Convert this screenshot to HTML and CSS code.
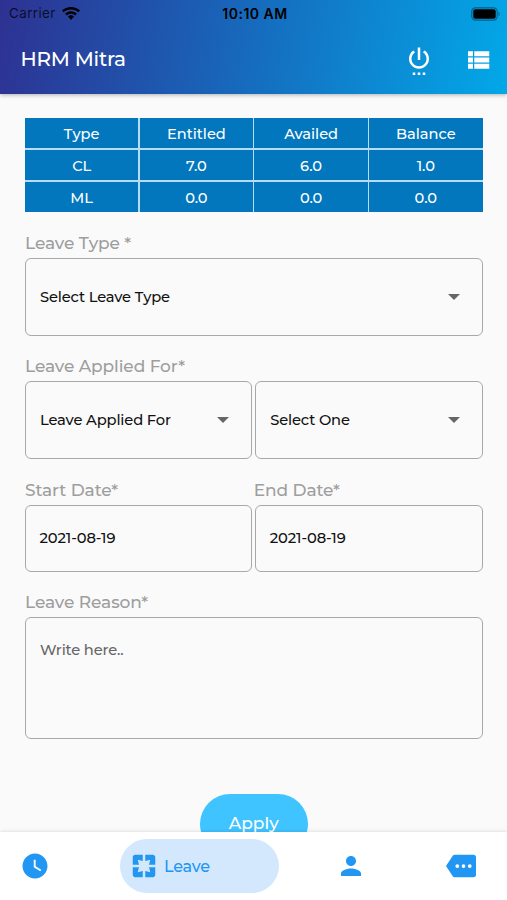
FILE: index.html
```html
<!DOCTYPE html>
<html lang="en">
<head>
<meta charset="utf-8">
<title>HRM Mitra</title>
<link rel="stylesheet" href="styles.css">
</head>
<body>
<div class="app">
  <header class="header">
    <div class="status">
      <div class="carrier"><span>Carrier</span>
        <svg class="wifi" viewBox="0 0 18 13"><path d="M9 0C5.500 0 2.300 1.300 0 3.500l1.700 1.800C3.600 3.500 6.100 2.500 9 2.500s5.400 1 7.300 2.800L18 3.500C15.700 1.300 12.500 0 9 0zM9 4.200c-2.300 0-4.400.9-5.900 2.400l1.700 1.800C5.900 7.300 7.400 6.700 9 6.700s3.100.6 4.200 1.700l1.700-1.800C13.400 5.100 11.300 4.200 9 4.200zM9 8.300c-1.100 0-2.200.5-3 1.200L9 13l3-3.500c-.8-.7-1.900-1.200-3-1.200z"/></svg>
      </div>
      <span class="time">10:10 AM</span>
      <svg class="battery" viewBox="0 0 30 14"><rect x=".8" y=".8" width="25.400" height="12.400" rx="3.600" fill="none" stroke="#000" stroke-opacity=".4" stroke-width="1.200"/><rect x="2.300" y="2.300" width="22.400" height="9.400" rx="2"/><path d="M27.500 4.800c1.500.4 1.500 4 0 4.400z" opacity=".4"/></svg>
    </div>
    <div class="toolbar">
      <h1 class="title">HRM Mitra</h1>
      <svg class="icon power" viewBox="0 0 24 24"><path d="M7 24h2v-2H7v2zm4 0h2v-2h-2v2zm2-22h-2v10h2V2zm3.560 2.440l-1.450 1.450C16.840 6.940 18 8.830 18 11c0 3.310-2.690 6-6 6s-6-2.690-6-6c0-2.170 1.160-4.060 2.880-5.120L7.440 4.440C5.360 5.880 4 8.280 4 11c0 4.420 3.580 8 8 8s8-3.580 8-8c0-2.720-1.360-5.120-3.440-6.560zM15 24h2v-2h-2v2z"/></svg>
      <svg class="icon" viewBox="0 0 24 24"><path d="M4 14h4v-4H4v4zm0 5h4v-4H4v4zM4 9h4V5H4v4zm5 5h12v-4H9v4zm0 5h12v-4H9v4zM9 5v4h12V5H9z"/></svg>
    </div>
  </header>

  <main class="content">
    <div class="balances">
      <span>Type</span><span>Entitled</span><span>Availed</span><span>Balance</span>
      <span>CL</span><span>7.0</span><span>6.0</span><span>1.0</span>
      <span>ML</span><span>0.0</span><span>0.0</span><span>0.0</span>
    </div>

    <div class="label">Leave Type *</div>
    <div class="box select"><span class="value">Select Leave Type</span><i class="arrow"></i></div>

    <div class="label">Leave Applied For*</div>
    <div class="pair">
      <div class="box select"><span class="value">Leave Applied For</span><i class="arrow"></i></div>
      <div class="box select"><span class="value">Select One</span><i class="arrow"></i></div>
    </div>

    <div class="labels"><div class="label">Start Date*</div><div class="label">End Date*</div></div>
    <div class="pair">
      <div class="box date"><span class="value day">2021-08-19</span></div>
      <div class="box date"><span class="value day">2021-08-19</span></div>
    </div>

    <div class="label reason">Leave Reason*</div>
    <div class="box area"><span class="value hint">Write here..</span></div>

    <div class="apply"><span>Apply</span></div>
  </main>

  <nav class="nav">
    <svg class="icon" viewBox="0 0 24 24"><path d="M12 2C6.500 2 2 6.500 2 12s4.500 10 10 10 10-4.500 10-10S17.500 2 12 2zm4.200 14.200L11 13V7h1.500v5.200l4.500 2.700-.8 1.300z"/></svg>
    <div class="active">
      <svg class="icon" viewBox="0 0 24 24"><path d="M3 5v6h5L7 7l4 1V3H5c-1.100 0-2 .9-2 2zm5 8H3v6c0 1.100.9 2 2 2h6v-5l-4 1 1-4zm9 4l-4-1v5h6c1.100 0 2-.9 2-2v-6h-5l1 4zm2-14h-6v5l4-1-1 4h5V5c0-1.100-.9-2-2-2z"/></svg>
      <span>Leave</span>
    </div>
    <svg class="icon person" viewBox="0 0 24 24"><path d="M12 12c2.210 0 4-1.790 4-4s-1.790-4-4-4-4 1.790-4 4 1.790 4 4 4zm0 2c-2.670 0-8 1.340-8 4v2h16v-2c0-2.660-5.330-4-8-4z"/></svg>
    <svg class="icon" viewBox="0 0 24 24"><path d="M22 3H7c-.69 0-1.230.35-1.590.88L0 12l5.410 8.110c.36.53.97.89 1.660.89H22c1.100 0 2-.9 2-2V5c0-1.100-.9-2-2-2z"/><g fill="#fff"><circle cx="9" cy="12" r="1.500"/><circle cx="14" cy="12" r="1.500"/><circle cx="19" cy="12" r="1.500"/></g></svg>
  </nav>
</div>
</body>
</html>
```
FILE: styles.css
```css
* { box-sizing: border-box; }
body { margin: 0; font-family: Montserrat, Inter, sans-serif; font-weight: 500; }
.app { width: 507px; height: 900px; display: flex; flex-direction: column; overflow: hidden; background: #fafafa; }
.header { height: 94px; flex: none; z-index: 1; background: linear-gradient(100deg, #2e3192 0%, #1769bc 48%, #02a8e8 100%); box-shadow: 0 1px 4px rgba(0,0,0,.3); }
.status { height: 27px; display: grid; grid-template-columns: 1fr auto 1fr; align-items: center; padding: 0 6px 0 9px; font: 400 13.500px/27px Inter, sans-serif; }
.carrier { display: flex; align-items: center; gap: 6px; color: rgba(0,0,0,.75); letter-spacing: .35px; }
.wifi { width: 18px; height: 13px; fill: #000; }
.time { font-size: 14px; font-weight: 600; letter-spacing: .500px; }
.battery { width: 30px; height: 14px; justify-self: end; }
.toolbar { display: flex; align-items: center; height: 65px; padding: 0 14px 0 20.500px; color: #fff; }
.title { margin: 0 0 2px; flex: 1; font-size: 20px; font-weight: 500; line-height: 30px; letter-spacing: -.25px; }
.icon { width: 30px; height: 30px; fill: currentColor; flex: none; }
.power { margin-right: 29px; }
.content { flex: 1; min-height: 0; overflow: hidden; padding: 24px 24.500px 0 25px; }
.balances { display: grid; grid-template-columns: repeat(4, 1fr); grid-template-rows: repeat(3, 30.400px); gap: 1.400px; background: #b5ddf5; color: #fff; font-size: 14.600px; text-align: center; line-height: 32px; }
.balances span { background: #0277bd; }
.label { height: 45.500px; padding-top: 18.500px; font-size: 17px; line-height: 24px; letter-spacing: -.1px; color: #9e9e9e; }
.balances + .label { height: 46px; padding-top: 19px; }
.reason { height: 45px; padding-top: 18px; }
.box { border: 1px solid #a8a8a8; border-radius: 6px; }
.select { height: 78px; display: flex; align-items: center; justify-content: space-between; padding: 0 22px 0 14px; }
.value { font-size: 14.700px; line-height: 22px; letter-spacing: -.15px; color: #111; }
.day { letter-spacing: -.1px; }
.arrow { border: 6px solid transparent; border-top-color: #666; border-bottom: 0; }
.pair { display: grid; grid-template-columns: 1fr 1fr; gap: 3px; }
.labels { display: grid; grid-template-columns: 1fr 1fr; }
.date { height: 67px; padding: 21px 13.500px; }
.area { height: 122px; padding: 21px 14px; }
.hint { color: #666; }
.apply { width: 108px; height: 60px; margin: 55px auto 0; border-radius: 30px; background: #40c4ff; color: #fff; text-align: center; font-size: 17px; line-height: 59px; }
.nav { height: 68px; flex: none; z-index: 1; display: flex; align-items: center; padding: 0 20px; background: #fff; color: #2196f3; box-shadow: 0 -1px 3px rgba(0,0,0,.1); }
.active { width: 159px; height: 54px; margin: 0 57px 0 70px; display: flex; align-items: center; gap: 5px; padding-left: 9px; border-radius: 27px; background: #d3e8fd; font-size: 16px; letter-spacing: -.2px; }
.person { margin-right: 80px; }
```
